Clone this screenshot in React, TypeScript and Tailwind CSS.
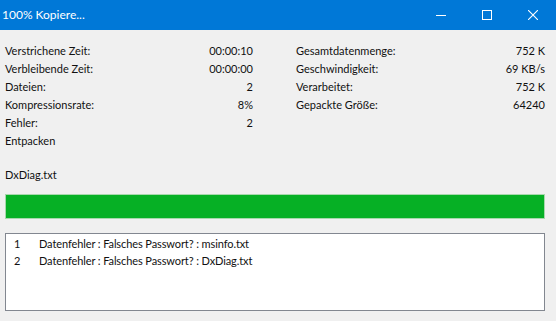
import React from 'react';

const leftRows: [string, string][] = [
    ['Verstrichene Zeit:', '00:00:10'],
    ['Verbleibende Zeit:', '00:00:00'],
    ['Dateien:', '2'],
    ['Kompressionsrate:', '8%'],
    ['Fehler:', '2'],
];

const rightRows: [string, string][] = [
    ['Gesamtdatenmenge:', '752 K'],
    ['Geschwindigkeit:', '69 KB/s'],
    ['Verarbeitet:', '752 K'],
    ['Gepackte Größe:', '64240'],
];

const errors = [
    'Datenfehler : Falsches Passwort? : msinfo.txt',
    'Datenfehler : Falsches Passwort? : DxDiag.txt',
];

const InfoRow = ({ label, value }: { label: string; value: string }) => (
    <div className="flex h-[18px] items-center justify-between leading-[18px]">
        <span>{label}</span>
        <span>{value}</span>
    </div>
);

export default function App() {
    return (
        <div className="flex h-[321px] w-[556px] flex-col overflow-hidden bg-[#f0f0f0] text-[11px] text-[#111] [font-family:Lato,sans-serif]">
            {/* title bar */}
            <div className="flex h-[30px] shrink-0 items-center bg-[#0078d7] text-white">
                <div className="flex-1 pl-[2px] text-[12px]">100% Kopiere...</div>
                <div className="flex h-full">
                    <div className="flex h-full w-[46px] items-center justify-center">
                        <svg width="10" height="10" viewBox="0 0 10 10">
                            <path d="M0 5.5h10" stroke="white" strokeWidth="1" />
                        </svg>
                    </div>
                    <div className="flex h-full w-[46px] items-center justify-center">
                        <svg width="10" height="10" viewBox="0 0 10 10">
                            <rect x="0.5" y="0.5" width="9" height="9" fill="none" stroke="white" strokeWidth="1" />
                        </svg>
                    </div>
                    <div className="flex h-full w-[46px] items-center justify-center">
                        <svg width="10" height="10" viewBox="0 0 10 10">
                            <path d="M0 0L10 10M10 0L0 10" stroke="white" strokeWidth="1.1" />
                        </svg>
                    </div>
                </div>
            </div>

            {/* stats */}
            <div className="mt-[12px] flex px-[5px]">
                <div className="w-[248px]">
                    {leftRows.map(([l, v]) => (
                        <InfoRow key={l} label={l} value={v} />
                    ))}
                    <div className="h-[18px] leading-[18px]">Entpacken</div>
                </div>
                <div className="ml-[43px] w-[249px]">
                    {rightRows.map(([l, v]) => (
                        <InfoRow key={l} label={l} value={v} />
                    ))}
                </div>
            </div>

            <div className="mt-[16px] h-[18px] px-[5px] leading-[18px]">DxDiag.txt</div>

            {/* progress */}
            <div className="mx-[5px] mt-[10px] h-[25px] w-[540px] border border-[#a8d8ad] bg-[#06b025]" />

            {/* error list */}
            <div className="mx-[5px] mt-[14px] h-[78px] w-[540px] border border-[#828790] bg-white pt-[1px]">
                {errors.map((e, i) => (
                    <div key={i} className="flex h-[17px] items-center leading-[17px]">
                        <span className="w-[33px] pl-[8px]">{i + 1}</span>
                        <span className="tracking-[-0.1px]">{e}</span>
                    </div>
                ))}
            </div>
        </div>
    );
}
